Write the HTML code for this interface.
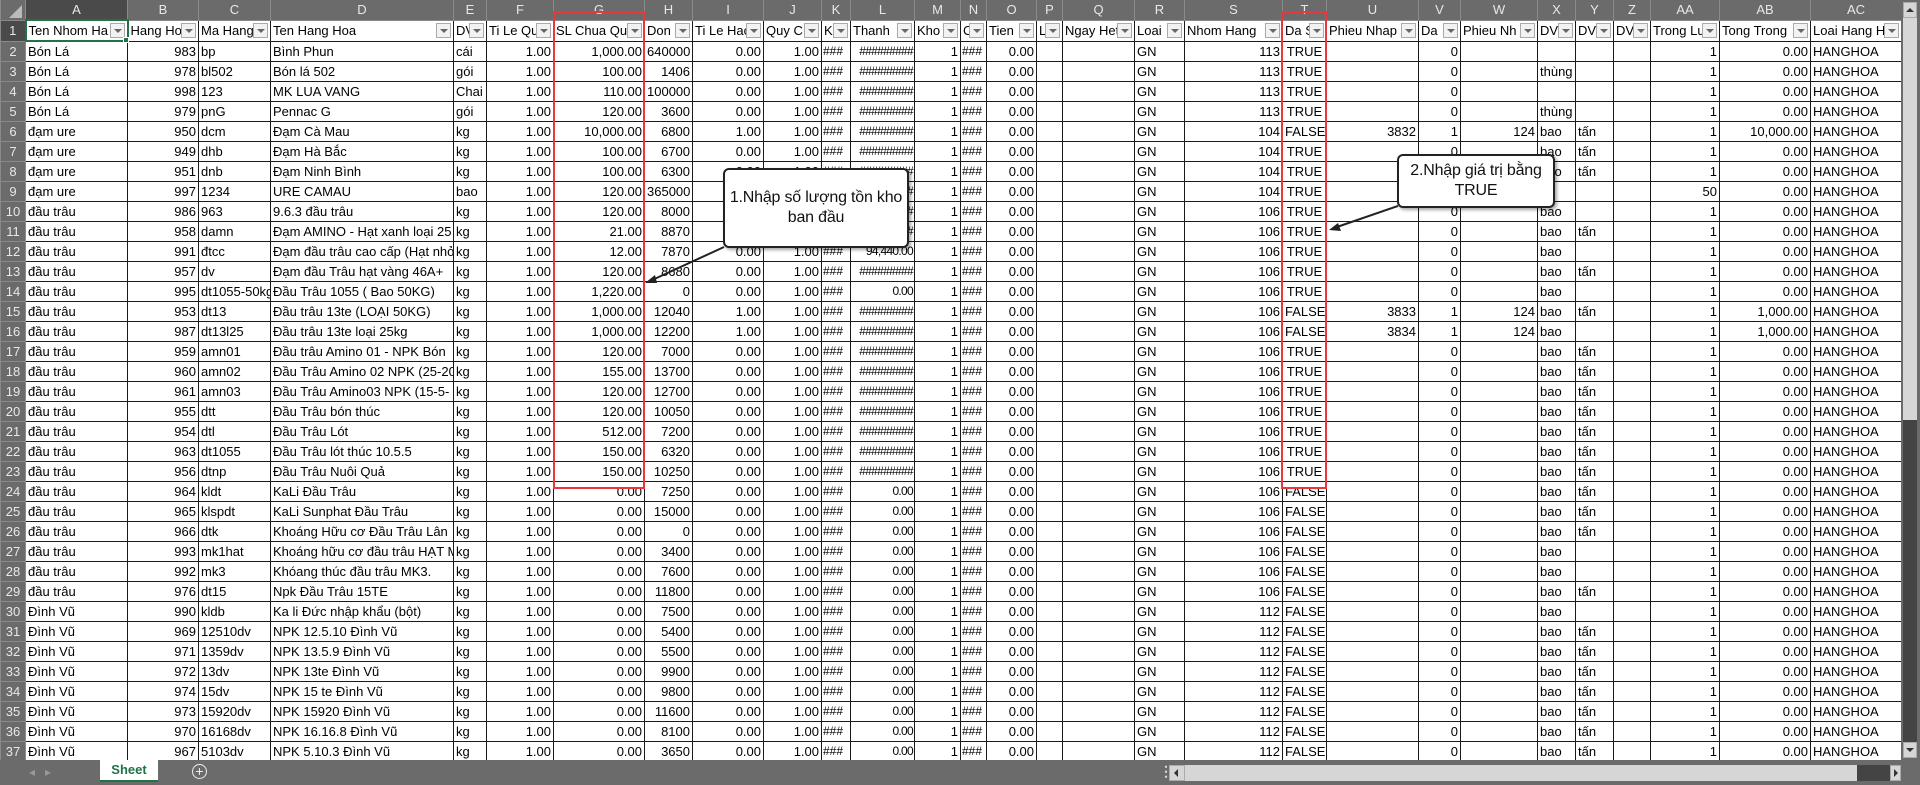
<!DOCTYPE html>
<html><head><meta charset="utf-8">
<style>
*{box-sizing:border-box;margin:0;padding:0}
body{width:1920px;height:785px;overflow:hidden;background:#6b6b6b;position:relative;font-family:"Liberation Sans",Arial,sans-serif}
table{position:absolute;left:0;top:0;border-collapse:collapse;table-layout:fixed;width:1901px;font-size:13px;color:#000}
td,th{height:20px;padding:0 2px;white-space:nowrap;overflow:hidden;line-height:19px;font-weight:normal}
td{background:#fff;border:1px solid #1a1a1a}
th{background:#6b6b6b;color:#e8e8e8;font-size:13px;border:1px solid #8a8a8a;border-top:none;text-align:center}
tr.hd th{text-align:center;border-left:1px solid #8a8a8a}
tr.hd th.sel{background:#4a4a4a}
tr td:nth-child(3),tr td:nth-child(7),tr td:nth-child(8),tr td:nth-child(9),tr td:nth-child(10),tr td:nth-child(11),tr td:nth-child(13),tr td:nth-child(14),tr td:nth-child(16),tr td:nth-child(20),tr td:nth-child(22),tr td:nth-child(23),tr td:nth-child(24),tr td:nth-child(28),tr td:nth-child(29){text-align:right}
tr td:nth-child(21){text-align:center}
tr td:nth-child(12),tr td:nth-child(15){font-size:12px;padding:0 1px;text-overflow:clip}
tr td:nth-child(13){text-overflow:clip;padding:0 1px;font-size:12px;letter-spacing:-0.7px}
tr.r1 td{text-align:left!important;position:relative;padding-right:18px;font-size:13px;letter-spacing:0;padding-left:2px}
tr.r1 td b{position:absolute;right:2px;top:2px;width:15px;height:15px;border:1px solid #aaa;background:#f2f2f2}
tr.r1 td b:after{content:"";position:absolute;left:3px;top:5px;border-left:4px solid transparent;border-right:4px solid transparent;border-top:4px solid #666}
.rb{position:absolute;border:2px solid #e8383d}
.call{position:absolute;background:#fff;border:2px solid #222;border-radius:6px;font-size:16px;text-align:center;line-height:20px;color:#111;box-shadow:2px 2px 3px rgba(0,0,0,.35);white-space:nowrap;letter-spacing:-0.2px}
</style></head><body>
<table>
<colgroup><col style="width:25px"><col style="width:102px"><col style="width:71px"><col style="width:72px"><col style="width:183px"><col style="width:33px"><col style="width:67px"><col style="width:91px"><col style="width:48px"><col style="width:71px"><col style="width:58px"><col style="width:29px"><col style="width:64px"><col style="width:46px"><col style="width:26px"><col style="width:50px"><col style="width:26px"><col style="width:72px"><col style="width:50px"><col style="width:98px"><col style="width:44px"><col style="width:92px"><col style="width:42px"><col style="width:77px"><col style="width:38px"><col style="width:38px"><col style="width:37px"><col style="width:69px"><col style="width:91px"><col style="width:91px"></colgroup>
<tr class="hd"><th style="background:#6b6b6b"><span style="display:block;width:0;height:0;margin:4px 0 0 6px;border-left:13px solid transparent;border-bottom:13px solid #bbb"></span></th><th class="sel">A</th><th>B</th><th>C</th><th>D</th><th>E</th><th>F</th><th>G</th><th>H</th><th>I</th><th>J</th><th>K</th><th>L</th><th>M</th><th>N</th><th>O</th><th>P</th><th>Q</th><th>R</th><th>S</th><th>T</th><th>U</th><th>V</th><th>W</th><th>X</th><th>Y</th><th>Z</th><th>AA</th><th>AB</th><th>AC</th></tr>
<tr class="r1"><th style="background:#4a4a4a">1</th><td style="border:2px solid #217346">Ten Nhom Ha<b></b></td><td>Hang Ho<b></b></td><td>Ma Hang<b></b></td><td>Ten Hang Hoa<b></b></td><td>DV<b></b></td><td>Ti Le Quy<b></b></td><td>SL Chua Qu<b></b></td><td>Don<b></b></td><td>Ti Le Hao<b></b></td><td>Quy C<b></b></td><td>K<b></b></td><td>Thanh<b></b></td><td>Kho<b></b></td><td>C<b></b></td><td>Tien<b></b></td><td>L<b></b></td><td>Ngay Het<b></b></td><td>Loai<b></b></td><td>Nhom Hang<b></b></td><td>Da S<b></b></td><td>Phieu Nhap<b></b></td><td>Da<b></b></td><td>Phieu Nh<b></b></td><td>DV<b></b></td><td>DV<b></b></td><td>DV<b></b></td><td>Trong Lu<b></b></td><td>Tong Trong<b></b></td><td>Loai Hang H<b></b></td></tr>
<tr><th>2</th><td>Bón Lá</td><td>983</td><td>bp</td><td>Bình Phun</td><td>cái</td><td>1.00</td><td>1,000.00</td><td>640000</td><td>0.00</td><td>1.00</td><td>###</td><td>#########</td><td>1</td><td>###</td><td>0.00</td><td></td><td></td><td>GN</td><td>113</td><td>TRUE</td><td></td><td>0</td><td></td><td></td><td></td><td></td><td>1</td><td>0.00</td><td>HANGHOA</td></tr>
<tr><th>3</th><td>Bón Lá</td><td>978</td><td>bl502</td><td>Bón lá 502</td><td>gói</td><td>1.00</td><td>100.00</td><td>1406</td><td>0.00</td><td>1.00</td><td>###</td><td>#########</td><td>1</td><td>###</td><td>0.00</td><td></td><td></td><td>GN</td><td>113</td><td>TRUE</td><td></td><td>0</td><td></td><td>thùng</td><td></td><td></td><td>1</td><td>0.00</td><td>HANGHOA</td></tr>
<tr><th>4</th><td>Bón Lá</td><td>998</td><td>123</td><td>MK LUA VANG</td><td>Chai</td><td>1.00</td><td>110.00</td><td>100000</td><td>0.00</td><td>1.00</td><td>###</td><td>#########</td><td>1</td><td>###</td><td>0.00</td><td></td><td></td><td>GN</td><td>113</td><td>TRUE</td><td></td><td>0</td><td></td><td></td><td></td><td></td><td>1</td><td>0.00</td><td>HANGHOA</td></tr>
<tr><th>5</th><td>Bón Lá</td><td>979</td><td>pnG</td><td>Pennac G</td><td>gói</td><td>1.00</td><td>120.00</td><td>3600</td><td>0.00</td><td>1.00</td><td>###</td><td>#########</td><td>1</td><td>###</td><td>0.00</td><td></td><td></td><td>GN</td><td>113</td><td>TRUE</td><td></td><td>0</td><td></td><td>thùng</td><td></td><td></td><td>1</td><td>0.00</td><td>HANGHOA</td></tr>
<tr><th>6</th><td>đạm ure</td><td>950</td><td>dcm</td><td>Đạm Cà Mau</td><td>kg</td><td>1.00</td><td>10,000.00</td><td>6800</td><td>1.00</td><td>1.00</td><td>###</td><td>#########</td><td>1</td><td>###</td><td>0.00</td><td></td><td></td><td>GN</td><td>104</td><td>FALSE</td><td>3832</td><td>1</td><td>124</td><td>bao</td><td>tấn</td><td></td><td>1</td><td>10,000.00</td><td>HANGHOA</td></tr>
<tr><th>7</th><td>đạm ure</td><td>949</td><td>dhb</td><td>Đạm Hà Bắc</td><td>kg</td><td>1.00</td><td>100.00</td><td>6700</td><td>0.00</td><td>1.00</td><td>###</td><td>#########</td><td>1</td><td>###</td><td>0.00</td><td></td><td></td><td>GN</td><td>104</td><td>TRUE</td><td></td><td>0</td><td></td><td>bao</td><td>tấn</td><td></td><td>1</td><td>0.00</td><td>HANGHOA</td></tr>
<tr><th>8</th><td>đạm ure</td><td>951</td><td>dnb</td><td>Đạm Ninh Bình</td><td>kg</td><td>1.00</td><td>100.00</td><td>6300</td><td>0.00</td><td>1.00</td><td>###</td><td>#########</td><td>1</td><td>###</td><td>0.00</td><td></td><td></td><td>GN</td><td>104</td><td>TRUE</td><td></td><td>0</td><td></td><td>bao</td><td>tấn</td><td></td><td>1</td><td>0.00</td><td>HANGHOA</td></tr>
<tr><th>9</th><td>đạm ure</td><td>997</td><td>1234</td><td>URE CAMAU</td><td>bao</td><td>1.00</td><td>120.00</td><td>365000</td><td>0.00</td><td>1.00</td><td>###</td><td>#########</td><td>1</td><td>###</td><td>0.00</td><td></td><td></td><td>GN</td><td>104</td><td>TRUE</td><td></td><td>0</td><td></td><td></td><td></td><td></td><td>50</td><td>0.00</td><td>HANGHOA</td></tr>
<tr><th>10</th><td>đầu trâu</td><td>986</td><td>963</td><td>9.6.3 đầu trâu</td><td>kg</td><td>1.00</td><td>120.00</td><td>8000</td><td>0.00</td><td>1.00</td><td>###</td><td>#########</td><td>1</td><td>###</td><td>0.00</td><td></td><td></td><td>GN</td><td>106</td><td>TRUE</td><td></td><td>0</td><td></td><td>bao</td><td></td><td></td><td>1</td><td>0.00</td><td>HANGHOA</td></tr>
<tr><th>11</th><td>đầu trâu</td><td>958</td><td>damn</td><td>Đạm AMINO - Hạt xanh loại 25</td><td>kg</td><td>1.00</td><td>21.00</td><td>8870</td><td>0.00</td><td>1.00</td><td>###</td><td>#########</td><td>1</td><td>###</td><td>0.00</td><td></td><td></td><td>GN</td><td>106</td><td>TRUE</td><td></td><td>0</td><td></td><td>bao</td><td>tấn</td><td></td><td>1</td><td>0.00</td><td>HANGHOA</td></tr>
<tr><th>12</th><td>đầu trâu</td><td>991</td><td>đtcc</td><td>Đạm đầu trâu cao cấp (Hạt nhỏ</td><td>kg</td><td>1.00</td><td>12.00</td><td>7870</td><td>0.00</td><td>1.00</td><td>###</td><td>94,440.00</td><td>1</td><td>###</td><td>0.00</td><td></td><td></td><td>GN</td><td>106</td><td>TRUE</td><td></td><td>0</td><td></td><td>bao</td><td></td><td></td><td>1</td><td>0.00</td><td>HANGHOA</td></tr>
<tr><th>13</th><td>đầu trâu</td><td>957</td><td>dv</td><td>Đạm đầu Trâu hạt vàng 46A+</td><td>kg</td><td>1.00</td><td>120.00</td><td>8680</td><td>0.00</td><td>1.00</td><td>###</td><td>#########</td><td>1</td><td>###</td><td>0.00</td><td></td><td></td><td>GN</td><td>106</td><td>TRUE</td><td></td><td>0</td><td></td><td>bao</td><td>tấn</td><td></td><td>1</td><td>0.00</td><td>HANGHOA</td></tr>
<tr><th>14</th><td>đầu trâu</td><td>995</td><td>dt1055-50kg</td><td>Đầu Trâu 1055 ( Bao 50KG)</td><td>kg</td><td>1.00</td><td>1,220.00</td><td>0</td><td>0.00</td><td>1.00</td><td>###</td><td>0.00</td><td>1</td><td>###</td><td>0.00</td><td></td><td></td><td>GN</td><td>106</td><td>TRUE</td><td></td><td>0</td><td></td><td>bao</td><td></td><td></td><td>1</td><td>0.00</td><td>HANGHOA</td></tr>
<tr><th>15</th><td>đầu trâu</td><td>953</td><td>dt13</td><td>Đầu trâu 13te (LOẠI 50KG)</td><td>kg</td><td>1.00</td><td>1,000.00</td><td>12040</td><td>1.00</td><td>1.00</td><td>###</td><td>#########</td><td>1</td><td>###</td><td>0.00</td><td></td><td></td><td>GN</td><td>106</td><td>FALSE</td><td>3833</td><td>1</td><td>124</td><td>bao</td><td>tấn</td><td></td><td>1</td><td>1,000.00</td><td>HANGHOA</td></tr>
<tr><th>16</th><td>đầu trâu</td><td>987</td><td>dt13l25</td><td>Đầu trâu 13te loại 25kg</td><td>kg</td><td>1.00</td><td>1,000.00</td><td>12200</td><td>1.00</td><td>1.00</td><td>###</td><td>#########</td><td>1</td><td>###</td><td>0.00</td><td></td><td></td><td>GN</td><td>106</td><td>FALSE</td><td>3834</td><td>1</td><td>124</td><td>bao</td><td></td><td></td><td>1</td><td>1,000.00</td><td>HANGHOA</td></tr>
<tr><th>17</th><td>đầu trâu</td><td>959</td><td>amn01</td><td>Đầu trâu Amino 01 - NPK Bón</td><td>kg</td><td>1.00</td><td>120.00</td><td>7000</td><td>0.00</td><td>1.00</td><td>###</td><td>#########</td><td>1</td><td>###</td><td>0.00</td><td></td><td></td><td>GN</td><td>106</td><td>TRUE</td><td></td><td>0</td><td></td><td>bao</td><td>tấn</td><td></td><td>1</td><td>0.00</td><td>HANGHOA</td></tr>
<tr><th>18</th><td>đầu trâu</td><td>960</td><td>amn02</td><td>Đầu Trâu Amino 02 NPK (25-20</td><td>kg</td><td>1.00</td><td>155.00</td><td>13700</td><td>0.00</td><td>1.00</td><td>###</td><td>#########</td><td>1</td><td>###</td><td>0.00</td><td></td><td></td><td>GN</td><td>106</td><td>TRUE</td><td></td><td>0</td><td></td><td>bao</td><td>tấn</td><td></td><td>1</td><td>0.00</td><td>HANGHOA</td></tr>
<tr><th>19</th><td>đầu trâu</td><td>961</td><td>amn03</td><td>Đầu Trâu Amino03 NPK (15-5-</td><td>kg</td><td>1.00</td><td>120.00</td><td>12700</td><td>0.00</td><td>1.00</td><td>###</td><td>#########</td><td>1</td><td>###</td><td>0.00</td><td></td><td></td><td>GN</td><td>106</td><td>TRUE</td><td></td><td>0</td><td></td><td>bao</td><td>tấn</td><td></td><td>1</td><td>0.00</td><td>HANGHOA</td></tr>
<tr><th>20</th><td>đầu trâu</td><td>955</td><td>dtt</td><td>Đầu Trâu bón thúc</td><td>kg</td><td>1.00</td><td>120.00</td><td>10050</td><td>0.00</td><td>1.00</td><td>###</td><td>#########</td><td>1</td><td>###</td><td>0.00</td><td></td><td></td><td>GN</td><td>106</td><td>TRUE</td><td></td><td>0</td><td></td><td>bao</td><td>tấn</td><td></td><td>1</td><td>0.00</td><td>HANGHOA</td></tr>
<tr><th>21</th><td>đầu trâu</td><td>954</td><td>dtl</td><td>Đầu Trâu Lót</td><td>kg</td><td>1.00</td><td>512.00</td><td>7200</td><td>0.00</td><td>1.00</td><td>###</td><td>#########</td><td>1</td><td>###</td><td>0.00</td><td></td><td></td><td>GN</td><td>106</td><td>TRUE</td><td></td><td>0</td><td></td><td>bao</td><td>tấn</td><td></td><td>1</td><td>0.00</td><td>HANGHOA</td></tr>
<tr><th>22</th><td>đầu trâu</td><td>963</td><td>dt1055</td><td>Đầu Trâu lót thúc 10.5.5</td><td>kg</td><td>1.00</td><td>150.00</td><td>6320</td><td>0.00</td><td>1.00</td><td>###</td><td>#########</td><td>1</td><td>###</td><td>0.00</td><td></td><td></td><td>GN</td><td>106</td><td>TRUE</td><td></td><td>0</td><td></td><td>bao</td><td>tấn</td><td></td><td>1</td><td>0.00</td><td>HANGHOA</td></tr>
<tr><th>23</th><td>đầu trâu</td><td>956</td><td>dtnp</td><td>Đầu Trâu Nuôi Quả</td><td>kg</td><td>1.00</td><td>150.00</td><td>10250</td><td>0.00</td><td>1.00</td><td>###</td><td>#########</td><td>1</td><td>###</td><td>0.00</td><td></td><td></td><td>GN</td><td>106</td><td>TRUE</td><td></td><td>0</td><td></td><td>bao</td><td>tấn</td><td></td><td>1</td><td>0.00</td><td>HANGHOA</td></tr>
<tr><th>24</th><td>đầu trâu</td><td>964</td><td>kldt</td><td>KaLi Đầu Trâu</td><td>kg</td><td>1.00</td><td>0.00</td><td>7250</td><td>0.00</td><td>1.00</td><td>###</td><td>0.00</td><td>1</td><td>###</td><td>0.00</td><td></td><td></td><td>GN</td><td>106</td><td>FALSE</td><td></td><td>0</td><td></td><td>bao</td><td>tấn</td><td></td><td>1</td><td>0.00</td><td>HANGHOA</td></tr>
<tr><th>25</th><td>đầu trâu</td><td>965</td><td>klspdt</td><td>KaLi Sunphat Đầu Trâu</td><td>kg</td><td>1.00</td><td>0.00</td><td>15000</td><td>0.00</td><td>1.00</td><td>###</td><td>0.00</td><td>1</td><td>###</td><td>0.00</td><td></td><td></td><td>GN</td><td>106</td><td>FALSE</td><td></td><td>0</td><td></td><td>bao</td><td>tấn</td><td></td><td>1</td><td>0.00</td><td>HANGHOA</td></tr>
<tr><th>26</th><td>đầu trâu</td><td>966</td><td>dtk</td><td>Khoáng Hữu cơ Đầu Trâu  Lân</td><td>kg</td><td>1.00</td><td>0.00</td><td>0</td><td>0.00</td><td>1.00</td><td>###</td><td>0.00</td><td>1</td><td>###</td><td>0.00</td><td></td><td></td><td>GN</td><td>106</td><td>FALSE</td><td></td><td>0</td><td></td><td>bao</td><td>tấn</td><td></td><td>1</td><td>0.00</td><td>HANGHOA</td></tr>
<tr><th>27</th><td>đầu trâu</td><td>993</td><td>mk1hat</td><td>Khoáng hữu cơ đầu trâu HẠT M</td><td>kg</td><td>1.00</td><td>0.00</td><td>3400</td><td>0.00</td><td>1.00</td><td>###</td><td>0.00</td><td>1</td><td>###</td><td>0.00</td><td></td><td></td><td>GN</td><td>106</td><td>FALSE</td><td></td><td>0</td><td></td><td>bao</td><td></td><td></td><td>1</td><td>0.00</td><td>HANGHOA</td></tr>
<tr><th>28</th><td>đầu trâu</td><td>992</td><td>mk3</td><td>Khóang thúc đầu trâu MK3.</td><td>kg</td><td>1.00</td><td>0.00</td><td>7600</td><td>0.00</td><td>1.00</td><td>###</td><td>0.00</td><td>1</td><td>###</td><td>0.00</td><td></td><td></td><td>GN</td><td>106</td><td>FALSE</td><td></td><td>0</td><td></td><td>bao</td><td></td><td></td><td>1</td><td>0.00</td><td>HANGHOA</td></tr>
<tr><th>29</th><td>đầu trâu</td><td>976</td><td>dt15</td><td>Npk Đầu Trâu 15TE</td><td>kg</td><td>1.00</td><td>0.00</td><td>11800</td><td>0.00</td><td>1.00</td><td>###</td><td>0.00</td><td>1</td><td>###</td><td>0.00</td><td></td><td></td><td>GN</td><td>106</td><td>FALSE</td><td></td><td>0</td><td></td><td>bao</td><td>tấn</td><td></td><td>1</td><td>0.00</td><td>HANGHOA</td></tr>
<tr><th>30</th><td>Đình Vũ</td><td>990</td><td>kldb</td><td>Ka li Đức nhập khẩu (bột)</td><td>kg</td><td>1.00</td><td>0.00</td><td>7500</td><td>0.00</td><td>1.00</td><td>###</td><td>0.00</td><td>1</td><td>###</td><td>0.00</td><td></td><td></td><td>GN</td><td>112</td><td>FALSE</td><td></td><td>0</td><td></td><td>bao</td><td></td><td></td><td>1</td><td>0.00</td><td>HANGHOA</td></tr>
<tr><th>31</th><td>Đình Vũ</td><td>969</td><td>12510dv</td><td>NPK 12.5.10 Đình Vũ</td><td>kg</td><td>1.00</td><td>0.00</td><td>5400</td><td>0.00</td><td>1.00</td><td>###</td><td>0.00</td><td>1</td><td>###</td><td>0.00</td><td></td><td></td><td>GN</td><td>112</td><td>FALSE</td><td></td><td>0</td><td></td><td>bao</td><td>tấn</td><td></td><td>1</td><td>0.00</td><td>HANGHOA</td></tr>
<tr><th>32</th><td>Đình Vũ</td><td>971</td><td>1359dv</td><td>NPK 13.5.9 Đình Vũ</td><td>kg</td><td>1.00</td><td>0.00</td><td>5500</td><td>0.00</td><td>1.00</td><td>###</td><td>0.00</td><td>1</td><td>###</td><td>0.00</td><td></td><td></td><td>GN</td><td>112</td><td>FALSE</td><td></td><td>0</td><td></td><td>bao</td><td>tấn</td><td></td><td>1</td><td>0.00</td><td>HANGHOA</td></tr>
<tr><th>33</th><td>Đình Vũ</td><td>972</td><td>13dv</td><td>NPK 13te Đình Vũ</td><td>kg</td><td>1.00</td><td>0.00</td><td>9900</td><td>0.00</td><td>1.00</td><td>###</td><td>0.00</td><td>1</td><td>###</td><td>0.00</td><td></td><td></td><td>GN</td><td>112</td><td>FALSE</td><td></td><td>0</td><td></td><td>bao</td><td>tấn</td><td></td><td>1</td><td>0.00</td><td>HANGHOA</td></tr>
<tr><th>34</th><td>Đình Vũ</td><td>974</td><td>15dv</td><td>NPK 15 te Đình Vũ</td><td>kg</td><td>1.00</td><td>0.00</td><td>9800</td><td>0.00</td><td>1.00</td><td>###</td><td>0.00</td><td>1</td><td>###</td><td>0.00</td><td></td><td></td><td>GN</td><td>112</td><td>FALSE</td><td></td><td>0</td><td></td><td>bao</td><td>tấn</td><td></td><td>1</td><td>0.00</td><td>HANGHOA</td></tr>
<tr><th>35</th><td>Đình Vũ</td><td>973</td><td>15920dv</td><td>NPK 15920 Đình Vũ</td><td>kg</td><td>1.00</td><td>0.00</td><td>11600</td><td>0.00</td><td>1.00</td><td>###</td><td>0.00</td><td>1</td><td>###</td><td>0.00</td><td></td><td></td><td>GN</td><td>112</td><td>FALSE</td><td></td><td>0</td><td></td><td>bao</td><td>tấn</td><td></td><td>1</td><td>0.00</td><td>HANGHOA</td></tr>
<tr><th>36</th><td>Đình Vũ</td><td>970</td><td>16168dv</td><td>NPK 16.16.8 Đình Vũ</td><td>kg</td><td>1.00</td><td>0.00</td><td>8100</td><td>0.00</td><td>1.00</td><td>###</td><td>0.00</td><td>1</td><td>###</td><td>0.00</td><td></td><td></td><td>GN</td><td>112</td><td>FALSE</td><td></td><td>0</td><td></td><td>bao</td><td>tấn</td><td></td><td>1</td><td>0.00</td><td>HANGHOA</td></tr>
<tr><th>37</th><td>Đình Vũ</td><td>967</td><td>5103dv</td><td>NPK 5.10.3 Đình Vũ</td><td>kg</td><td>1.00</td><td>0.00</td><td>3650</td><td>0.00</td><td>1.00</td><td>###</td><td>0.00</td><td>1</td><td>###</td><td>0.00</td><td></td><td></td><td>GN</td><td>112</td><td>FALSE</td><td></td><td>0</td><td></td><td>bao</td><td>tấn</td><td></td><td>1</td><td>0.00</td><td>HANGHOA</td></tr>
</table>

<div style="position:absolute;left:123px;top:37px;width:6px;height:6px;background:#217346;border:1px solid #fff"></div>

<div class="rb" style="left:553px;top:11px;width:92px;height:478px"></div>
<div class="rb" style="left:1281px;top:11px;width:46px;height:478px"></div>

<div class="call" style="left:723px;top:168px;width:186px;height:80px;padding-top:18px">1.Nhập số lượng tồn kho<br>ban đầu</div>
<div class="call" style="left:1397px;top:154px;width:158px;height:54px;padding-top:5px">2.Nhập giá trị bằng<br>TRUE</div>
<svg width="1920" height="785" style="position:absolute;left:0;top:0;pointer-events:none">
<line x1="724" y1="247" x2="650" y2="281" stroke="#222" stroke-width="2"/>
<polygon points="645,283 655,275 657,283" fill="#222"/>
<line x1="1398" y1="206" x2="1334" y2="228" stroke="#222" stroke-width="2"/>
<polygon points="1329,230 1338,223 1341,231" fill="#222"/>
</svg>

<div style="position:absolute;left:1901px;top:0;width:19px;height:760px;background:#6b6b6b"></div>
<div style="position:absolute;left:1903px;top:2px;width:14px;height:16px;background:#d6d6d6;border:1px solid #aaa"></div>
<div style="position:absolute;left:1906px;top:8px;border-left:4px solid transparent;border-right:4px solid transparent;border-bottom:4px solid #333"></div>
<div style="position:absolute;left:1903px;top:18px;width:14px;height:402px;background:#d6d6d6"></div>
<div style="position:absolute;left:1903px;top:420px;width:14px;height:322px;background:#444"></div>
<div style="position:absolute;left:1903px;top:742px;width:14px;height:16px;background:#d6d6d6;border:1px solid #aaa"></div>
<div style="position:absolute;left:1906px;top:748px;border-left:4px solid transparent;border-right:4px solid transparent;border-top:4px solid #333"></div>

<div style="position:absolute;left:0;top:760px;width:1920px;height:25px;background:#6b6b6b"></div>
<div style="position:absolute;left:29px;top:765px;color:#999;font-size:12px">◂&nbsp;&nbsp;&nbsp;▸</div>
<div style="position:absolute;left:100px;top:760px;width:58px;height:22px;background:#fff;border-bottom:2px solid #217346;color:#217346;font-weight:bold;font-size:13px;text-align:center;line-height:20px">Sheet</div>
<div style="position:absolute;left:192px;top:764px;width:15px;height:15px;border:1.5px solid #eee;border-radius:50%;color:#eee;font-size:14px;line-height:12px;text-align:center">+</div>
<div style="position:absolute;left:1159px;top:764px;color:#ddd;font-size:14px;line-height:14px;font-weight:bold">⋮</div>
<div style="position:absolute;left:1169px;top:765px;width:16px;height:16px;background:#d6d6d6;border:1px solid #aaa"></div>
<div style="position:absolute;left:1174px;top:769px;border-top:4px solid transparent;border-bottom:4px solid transparent;border-right:4px solid #333"></div>
<div style="position:absolute;left:1185px;top:765px;width:672px;height:16px;background:#d6d6d6"></div>
<div style="position:absolute;left:1857px;top:765px;width:33px;height:16px;background:#444"></div>
<div style="position:absolute;left:1890px;top:765px;width:11px;height:16px;background:#d6d6d6;border:1px solid #aaa"></div>
<div style="position:absolute;left:1894px;top:769px;border-top:4px solid transparent;border-bottom:4px solid transparent;border-left:4px solid #333"></div>
</body></html>
